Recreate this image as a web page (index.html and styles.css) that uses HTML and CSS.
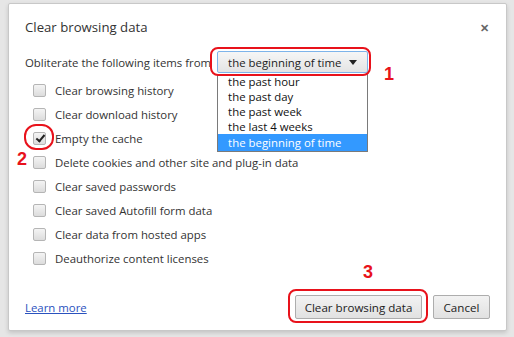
FILE: index.html
```html
<!DOCTYPE html>
<html lang="en">
<head>
    <meta charset="UTF-8">
    <title>Clear browsing data</title>
    <link rel="stylesheet" href="styles.css">
</head>
<body>
    <div class="dialog">
        <div class="dialog-header">
            <span class="dialog-title">Clear browsing data</span>
            <span class="close-btn">&#x2715;</span>
        </div>
        <div class="range-row">
            <span>Obliterate the following items from</span>
            <div class="select-wrap">
                <div class="select-box">
                    <span>the beginning of time</span>
                    <span class="arrow"></span>
                </div>
                <ul class="select-list">
                    <li>the past hour</li>
                    <li>the past day</li>
                    <li>the past week</li>
                    <li>the last 4 weeks</li>
                    <li class="selected">the beginning of time</li>
                </ul>
                <div class="mark mark-select"></div>
                <div class="num num-1">1</div>
            </div>
        </div>
        <ul class="options">
            <li><span class="checkbox"></span>Clear browsing history</li>
            <li><span class="checkbox"></span>Clear download history</li>
            <li class="marked"><span class="checkbox checked"></span>Empty the cache
                <div class="mark mark-check"></div>
                <div class="num num-2">2</div>
            </li>
            <li><span class="checkbox"></span>Delete cookies and other site and plug-in data</li>
            <li><span class="checkbox"></span>Clear saved passwords</li>
            <li><span class="checkbox"></span>Clear saved Autofill form data</li>
            <li><span class="checkbox"></span>Clear data from hosted apps</li>
            <li><span class="checkbox"></span>Deauthorize content licenses</li>
        </ul>
        <div class="dialog-footer">
            <a href="#" class="learn-more">Learn more</a>
            <div class="buttons">
                <div class="btn-wrap">
                    <button class="btn btn-clear">Clear browsing data</button>
                    <div class="mark mark-btn"></div>
                    <div class="num num-3">3</div>
                </div>
                <button class="btn btn-cancel">Cancel</button>
            </div>
        </div>
    </div>
</body>
</html>
```

FILE: styles.css
```css
body {
    margin: 0;
    width: 514px;
    height: 337px;
    font-family: "Open Sans", "Noto Sans", sans-serif;
    font-size: 11.4px;
    color: #333;
    background-color: #ececec;
    background-image: radial-gradient(#dedede 0.6px, transparent 0.8px);
    background-size: 2px 2px;
    overflow: hidden;
}
.dialog {
    box-sizing: border-box;
    margin: 3px 0 0 8px;
    width: 499px;
    height: 328px;
    background-color: #fff;
    border: 1px solid #c8c8c8;
    border-radius: 2px;
    box-shadow: 0 2px 4px rgba(0, 0, 0, 0.15);
    display: flex;
    flex-direction: column;
    position: relative;
}
.dialog-header {
    display: flex;
    justify-content: space-between;
    align-items: center;
    padding: 12px 17px 0 16px;
    height: 22px;
}
.dialog-title {
    font-size: 13.2px;
    color: #333;
}
.close-btn {
    font-size: 11px;
    font-weight: bold;
    color: #666;
}
.range-row {
    display: flex;
    align-items: center;
    padding: 13px 0 0 16px;
    height: 22px;
}
.select-wrap {
    position: relative;
    margin-left: 6px;
}
.select-box {
    box-sizing: border-box;
    width: 151px;
    height: 22px;
    border: 1px solid #7eb4ea;
    border-radius: 2px;
    background: linear-gradient(#f6f6f6, #e4e4e4);
    display: flex;
    align-items: center;
    justify-content: space-between;
    padding: 0 10px 0 10px;
    color: #222;
}
.arrow {
    width: 0;
    height: 0;
    border-left: 4.5px solid transparent;
    border-right: 4.5px solid transparent;
    border-top: 5px solid #222;
}
.select-list {
    position: absolute;
    top: 23px;
    left: 0;
    box-sizing: border-box;
    width: 151px;
    margin: 0;
    padding: 0;
    list-style: none;
    background-color: #fff;
    border: 1px solid #7a7a7a;
    border-top: none;
    z-index: 2;
    color: #111;
}
.select-list li {
    height: 15px;
    line-height: 15px;
    padding-left: 10px;
}
.select-list li.selected {
    background-color: #3399ff;
    color: #fff;
    height: 17px;
    line-height: 17px;
}
.mark {
    position: absolute;
    border: 2.5px solid #e8121b;
    z-index: 3;
}
.mark-select {
    left: -7px;
    top: -4px;
    width: 157px;
    height: 25px;
    border-radius: 8px;
}
.num {
    position: absolute;
    color: #e8121b;
    font-family: "Liberation Sans", Arial, sans-serif;
    font-weight: bold;
    font-size: 18px;
}
.num-1 {
    left: 167px;
    top: 13px;
}
.options {
    list-style: none;
    margin: 0;
    padding: 5px 0 0 24px;
}
.options li {
    display: flex;
    align-items: center;
    height: 24px;
    position: relative;
}
.checkbox {
    box-sizing: border-box;
    width: 13px;
    height: 13px;
    border: 1px solid #b5b5b5;
    border-radius: 2px;
    background: linear-gradient(#f4f4f4, #dcdcdc);
    margin-right: 9px;
    position: relative;
}
.checkbox.checked::after {
    content: "";
    position: absolute;
    left: 3.5px;
    top: 0.5px;
    width: 3px;
    height: 7px;
    border-right: 2.5px solid #222;
    border-bottom: 2.5px solid #222;
    transform: rotate(40deg);
}
.mark-check {
    left: -9px;
    top: -2px;
    width: 26px;
    height: 22px;
    border-radius: 12px;
}
.num-2 {
    left: -16px;
    top: 23px;
}
.dialog-footer {
    margin-top: auto;
    display: flex;
    align-items: center;
    justify-content: space-between;
    padding: 0 16px 11px 16px;
}
.learn-more {
    color: #2a52be;
    text-decoration: underline;
}
.buttons {
    display: flex;
    gap: 11px;
}
.btn-wrap {
    position: relative;
}
.btn {
    height: 24px;
    padding: 0;
    font-family: inherit;
    font-size: 11.6px;
    color: #222;
    border: 1px solid #adadad;
    border-radius: 2px;
    background: linear-gradient(#f2f2f2, #e1e1e1);
}
.btn-clear {
    width: 127px;
}
.btn-cancel {
    width: 57px;
}
.mark-btn {
    left: -7px;
    top: -6px;
    width: 136px;
    height: 30px;
    border-radius: 8px;
}
.num-3 {
    left: 68px;
    top: -33px;
}
```
